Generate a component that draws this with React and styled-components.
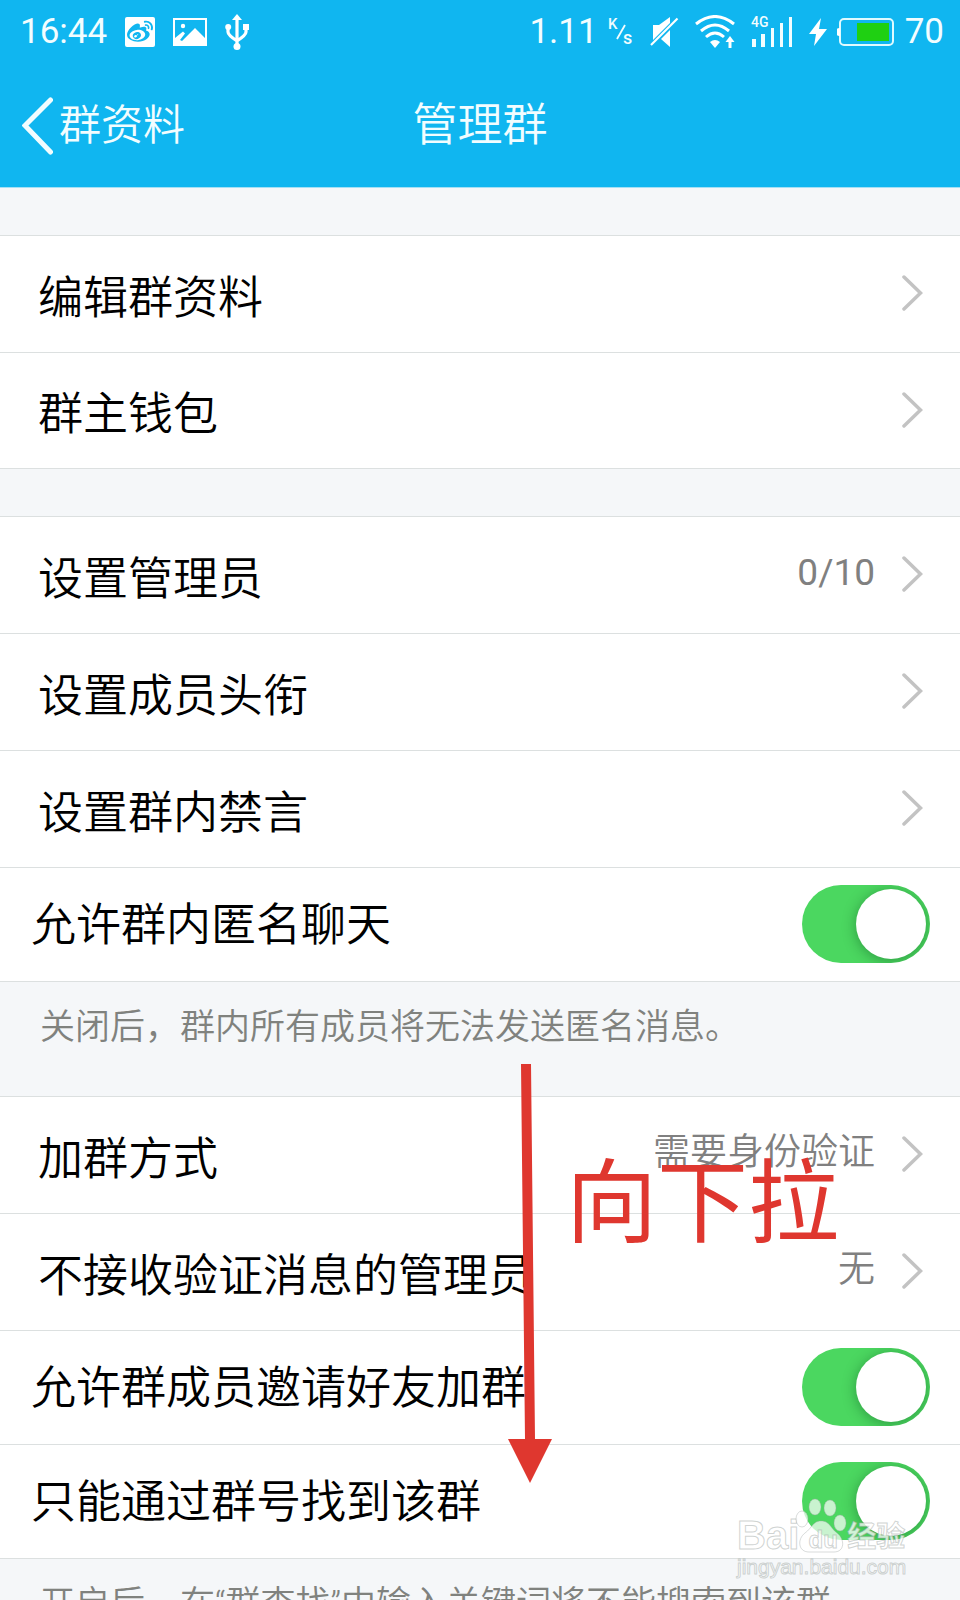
import React, { useState } from 'react';
import styled, { createGlobalStyle } from 'styled-components';
import { FaWeibo } from 'react-icons/fa';

const BLUE = '#10b6f0';
const RED = '#df372f';

const GlobalStyle = createGlobalStyle`
  * {
    box-sizing: border-box;
  }

  body {
    margin: 0;
    background: #f5f7f9;
    font-family: Roboto, 'Noto Sans CJK SC', sans-serif;
    font-weight: 350;
  }
`;

const Screen = styled.div`
  position: relative;
  display: flex;
  flex-direction: column;
  height: 100vh;
  overflow: hidden;
`;

const Header = styled.header`
  flex: none;
  color: #f2fdff;
  background: ${BLUE};
  border-bottom: 1px solid #a5e0f5;
`;

const StatusBar = styled.div`
  display: flex;
  align-items: center;
  justify-content: space-between;
  height: 64px;
  padding: 0 16px 0 20px;
  font-size: 35px;
  font-weight: 400;
  line-height: 40px;
`;

const StatusGroup = styled.div`
  display: flex;
  align-items: center;
  gap: ${props => props.$gap}px;

  svg {
    display: block;
    flex: none;
  }
`;

const WeiboBadge = styled.span`
  display: flex;
  align-items: center;
  justify-content: center;
  width: 30px;
  height: 30px;
  border-radius: 2px;
  background: #fff;
  color: ${BLUE};
`;

const NavBar = styled.nav`
  display: grid;
  grid-template-columns: 1fr auto 1fr;
  align-items: center;
  height: 123px;
  padding: 0 22px;
`;

const BackLink = styled.a`
  display: flex;
  align-items: center;
  gap: 6px;
  justify-self: start;
  color: inherit;
  font-size: 42px;
  line-height: 60px;
  text-decoration: none;
`;

const Title = styled.h1`
  margin: 0;
  font-size: 45px;
  font-weight: inherit;
  line-height: 60px;
`;

const List = styled.main`
  flex: 1;
  min-height: 0;
  overflow-y: auto;
  scrollbar-width: none;
`;

const Group = styled.section`
  margin-top: ${props => (props.$spaced ? 47 : 0)}px;
  border-top: 1px solid #dce0e0;
  background: #fff;
`;

const LinkRow = styled.a`
  display: flex;
  align-items: center;
  height: 117px;
  padding: 0 37px 2px 38px;
  border-bottom: 1px solid #dce0e0;
  color: #000;
  font-size: 45px;
  line-height: 64px;
  text-decoration: none;

  &:last-child {
    height: 116px;
  }
`;

const RowLabel = styled.span`
  flex: 1;
  padding-top: 11px;
`;

const RowValue = styled.span`
  margin-right: 27px;
  padding-bottom: 2px;
  color: #808080;
  font-size: 37px;
  font-weight: ${props => (props.$count ? 400 : 350)};
`;

const SwitchLine = styled.label`
  display: flex;
  align-items: center;
  justify-content: space-between;
  height: 114px;
  padding: 0 30px 2px 31px;
  border-bottom: 1px solid #dce0e0;
  color: #000;
  font-size: 45px;
  line-height: 64px;
`;

const SwitchLabel = styled.span`
  padding-top: 4px;
`;

const Switch = styled.input`
  appearance: none;
  flex: none;
  display: flex;
  width: 128px;
  height: 78px;
  margin: 0;
  padding: 4px;
  border-radius: 39px;
  background: #d8d8d8;
  overflow: hidden;

  &::before {
    content: '';
    width: 70px;
    height: 70px;
    border-radius: 50%;
    background: #fff;
    box-shadow: 0 2px 14px rgba(0, 60, 20, 0.4);
  }

  &:checked {
    justify-content: flex-end;
    background: #4bd760;
  }
`;

const Note = styled.p`
  height: 114px;
  margin: 0;
  padding: 20px 40px 0;
  color: #80827e;
  font-size: 35px;
  line-height: 52px;
  white-space: nowrap;
`;

const ArrowMark = styled.svg`
  position: absolute;
  top: 1064px;
  left: 508px;
  pointer-events: none;
`;

const Callout = styled.div`
  position: absolute;
  top: 1139px;
  left: 566px;
  color: ${RED};
  font-size: 91px;
  font-weight: 400;
  line-height: 130px;
  pointer-events: none;
`;

const Watermark = styled.div`
  position: absolute;
  top: 1496px;
  right: 52px;
  width: 171px;
  color: rgba(255, 255, 255, 0.75);
  font-family: 'Liberation Sans', 'Noto Sans CJK SC', sans-serif;
  font-weight: 700;
  pointer-events: none;
  -webkit-text-stroke: 1px rgba(160, 168, 165, 0.5);
`;

const Brand = styled.div`
  display: flex;
  align-items: flex-end;
  height: 58px;
  font-size: 40px;
  line-height: 38px;
`;

const Paw = styled.span`
  position: relative;
  display: flex;
  align-items: flex-end;
  justify-content: center;
  width: 48px;
  height: 58px;

  svg {
    position: absolute;
    left: -5px;
    bottom: 0;
  }
`;

const PawText = styled.span`
  position: relative;
  color: rgba(255, 255, 255, 0.6);
  font-size: 24px;
  line-height: 28px;
`;

const BrandCn = styled.span`
  font-size: 29px;
  line-height: 34px;
`;

const Site = styled.div`
  font-size: 21px;
  font-weight: 400;
  line-height: 26px;
`;

const Chevron = () => (
  <svg width="21" height="38" viewBox="0 0 21 38" fill="none" aria-hidden="true">
    <path d="M2 3L18.500 19L2 35" stroke="#c3c3c3" strokeWidth="3.500" strokeLinecap="round" />
  </svg>
);

const BackIcon = () => (
  <svg width="31" height="58" viewBox="0 0 31 58" fill="none" aria-hidden="true">
    <path d="M28.500 3L3 28.500L28.500 55" stroke="currentColor" strokeWidth="5" strokeLinecap="round" />
  </svg>
);

const PhotoIcon = () => (
  <svg width="34" height="28" viewBox="0 0 34 28" aria-hidden="true">
    <rect x="1" y="1" width="32" height="26" fill="none" stroke="#fff" strokeWidth="2" />
    <circle cx="10" cy="8" r="2.200" fill="#fff" />
    <path d="M2 26V20L10 13.500L12 15.500L7 22L9 23L22 10L32 20V26Z" fill="#fff" />
  </svg>
);

const UsbIcon = () => (
  <svg width="24" height="36" viewBox="0 0 24 36" fill="none" aria-hidden="true">
    <path d="M12 4V32M3 13V18Q3 21 12 27Q21 21 21 18V13" stroke="#fff" strokeWidth="3.200" />
    <path d="M12 0L17 6H7Z" fill="#fff" />
    <circle cx="12" cy="32.500" r="3.500" fill="#fff" />
    <circle cx="3.200" cy="13" r="3" fill="#fff" />
    <path d="M18 10H24V16H18Z" fill="#fff" />
  </svg>
);

const SpeedUnit = () => (
  <svg width="26" height="44" viewBox="0 -8 26 44" fill="#f2fdff" aria-hidden="true">
    <text x="0" y="11" fontSize="15" fontWeight="500">K</text>
    <path d="M17 7L9 21" stroke="#f2fdff" strokeWidth="1.800" />
    <text x="15" y="26" fontSize="18" fontWeight="500">s</text>
  </svg>
);

const MuteIcon = () => (
  <svg width="29" height="30" viewBox="0 0 29 30" aria-hidden="true">
    <path d="M3 8H9L20 0V6L3 23Z" fill="#fff" />
    <path d="M11 22L20 13V30Z" fill="#fff" />
    <path d="M1 28L27.500 1.500" stroke="#fff" strokeWidth="2.200" />
  </svg>
);

const WifiIcon = () => (
  <svg width="40" height="34" viewBox="0 0 40 34" fill="none" aria-hidden="true">
    <path d="M1 9Q20 -6 39 9M6 16Q20 4 34 16M11 22Q20 14 29 22" stroke="#fff" strokeWidth="3" />
    <path d="M15 27Q20 23 25 27L20 33Z" fill="#fff" />
    <path d="M35 33V25" stroke="#fff" strokeWidth="3" />
    <path d="M35 21L39.500 27H30.500Z" fill="#fff" />
  </svg>
);

const SignalIcon = () => (
  <svg width="42" height="43" viewBox="0 -6 42 43" fill="#f2fdff" aria-hidden="true">
    <text x="0" y="10" fontSize="14" fontWeight="500">4G</text>
    <path d="M1 22H5V30H1ZM10 17H14V30H10ZM20 11H23V30H20ZM29 6H32V30H29ZM38 0H41V30H38Z" />
  </svg>
);

const BoltIcon = () => (
  <svg width="18" height="28" viewBox="0 0 18 28" fill="#fff" aria-hidden="true">
    <path d="M12 0L0 16H7L5 28L18 11H10Z" />
  </svg>
);

const BatteryIcon = () => (
  <svg width="58" height="28" viewBox="0 0 58 28" aria-hidden="true">
    <rect x="3" y="1" width="53" height="26" rx="4" fill="none" stroke="#dffaff" strokeWidth="2" />
    <path d="M0 11Q0 10 3 10V18Q0 18 0 17Z" fill="#fff" />
    <rect x="20" y="5" width="32" height="18" fill="#1fd012" />
  </svg>
);

const PawIcon = () => (
  <svg width="60" height="60" viewBox="0 0 60 60" aria-hidden="true">
    <g fill="rgba(255,255,255,.7)" stroke="rgba(160,168,165,.4)">
      <ellipse cx="8" cy="25" rx="6" ry="8" />
      <ellipse cx="21" cy="13" rx="6" ry="8" />
      <ellipse cx="36" cy="14" rx="6" ry="8" />
      <ellipse cx="46" cy="29" rx="6" ry="8" />
      <path d="M27 27C19 27 18 34 11 39C3 45 4 58 15 58H40C51 58 51 45 43 39C36 34 36 27 27 27Z" />
    </g>
  </svg>
);

const Row = ({ label, value, count }) => (
  <LinkRow href="#">
    <RowLabel>{label}</RowLabel>
    {value && <RowValue>{value}</RowValue>}
    {count && <RowValue $count>{count}</RowValue>}
    <Chevron />
  </LinkRow>
);

const SwitchRow = ({ id, label }) => {
  const [on, setOn] = useState(true);

  return (
    <SwitchLine htmlFor={id}>
      <SwitchLabel>{label}</SwitchLabel>
      <Switch id={id} type="checkbox" checked={on} onChange={() => setOn(!on)} />
    </SwitchLine>
  );
};

const App = () => (
  <Screen>
    <GlobalStyle />
    <Header>
      <StatusBar>
        <StatusGroup $gap={18}>
          <span>16:44</span>
          <WeiboBadge>
            <FaWeibo size={26} />
          </WeiboBadge>
          <PhotoIcon />
          <UsbIcon />
        </StatusGroup>
        <StatusGroup $gap={16}>
          <StatusGroup $gap={10}>
            <span>1.11</span>
            <SpeedUnit />
          </StatusGroup>
          <MuteIcon />
          <WifiIcon />
          <SignalIcon />
          <StatusGroup $gap={10}>
            <BoltIcon />
            <BatteryIcon />
            <span>70</span>
          </StatusGroup>
        </StatusGroup>
      </StatusBar>
      <NavBar>
        <BackLink href="#">
          <BackIcon />
          群资料
        </BackLink>
        <Title>管理群</Title>
      </NavBar>
    </Header>

    <List>
      <Group $spaced>
        <Row label="编辑群资料" />
        <Row label="群主钱包" />
      </Group>
      <Group $spaced>
        <Row label="设置管理员" count="0/10" />
        <Row label="设置成员头衔" />
        <Row label="设置群内禁言" />
        <SwitchRow id="anonymous" label="允许群内匿名聊天" />
      </Group>
      <Note>关闭后，群内所有成员将无法发送匿名消息。</Note>
      <Group>
        <Row label="加群方式" value="需要身份验证" />
        <Row label="不接收验证消息的管理员" value="无" />
        <SwitchRow id="invite" label="允许群成员邀请好友加群" />
        <SwitchRow id="search" label="只能通过群号找到该群" />
      </Group>
      <Note>开启后，在“群查找”中输入关键词将不能搜索到该群</Note>
    </List>

    <ArrowMark width="46" height="420" viewBox="0 0 46 420" fill={RED} aria-hidden="true">
      <path d="M13 0H23L27 375H44L22 419L0 375H17Z" />
    </ArrowMark>
    <Callout>向下拉</Callout>
    <Watermark>
      <Brand>
        <span>Bai</span>
        <Paw>
          <PawIcon />
          <PawText>du</PawText>
        </Paw>
        <BrandCn>经验</BrandCn>
      </Brand>
      <Site>jingyan.baidu.com</Site>
    </Watermark>
  </Screen>
);

export default App;
